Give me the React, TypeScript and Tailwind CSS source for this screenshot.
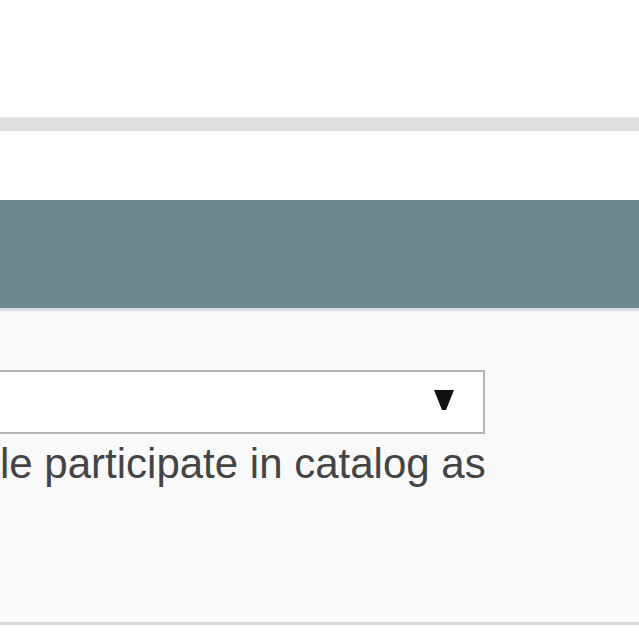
export default function App() {
  return (
    <div className="w-[639px] h-[639px] bg-white overflow-hidden flex flex-col">
      <div className="h-[117px] shrink-0" />
      <div className="h-[14px] shrink-0 bg-[#dedede] border-t border-[#e8e8e8]" />
      <div className="h-[69px] shrink-0" />
      <div className="h-[108px] shrink-0 bg-[#6f8790]" />
      <div className="h-[317px] shrink-0 bg-[#f9f9f9] border-t-[3px] border-t-[#d3dce0] border-b-[3px] border-b-[#d8d8d8] pt-[59px]">
        <div className="-ml-[20px] w-[505px] h-[64px] border-2 border-[#b4b4b4] bg-white flex items-center justify-end pr-[29px]">
          <svg width="20" height="20" viewBox="0 0 20 20" className="-mt-[4px]">
            <polygon points="0,0 20,0 12,20 8,20" fill="#111" />
          </svg>
        </div>
        <div
          className="mt-[6px] text-[42px] leading-[48px] text-[#444444] whitespace-nowrap"
          style={{ fontFamily: '"Liberation Sans", Arial, sans-serif' }}
        >
          le participate in catalog as
        </div>
      </div>
      <div className="flex-1 bg-white" />
    </div>
  );
}
